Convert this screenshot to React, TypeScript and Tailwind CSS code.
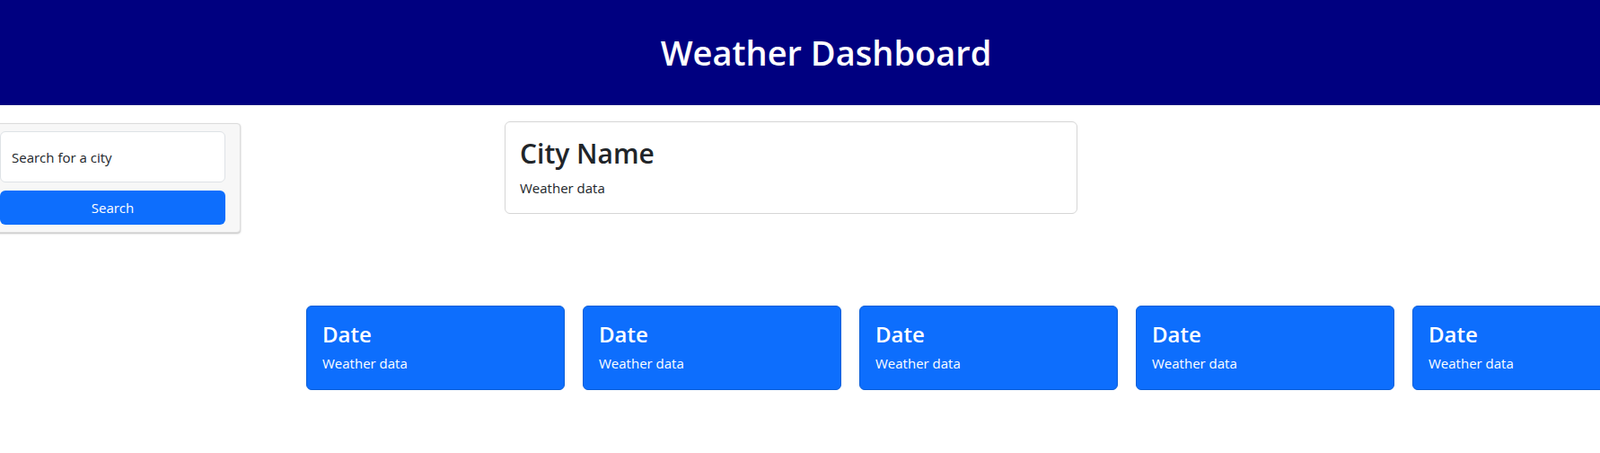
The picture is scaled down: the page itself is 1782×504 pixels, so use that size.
import React from "react";

const font = { fontFamily: '"Segoe UI", "Open Sans", "Noto Sans", sans-serif' };

function DateCard() {
  return (
    <div className="w-[288px] h-[94px] shrink-0 rounded-[6px] border border-[#0b5ed7] bg-[#0d6efd] px-[17px] pt-[17px] text-white">
      <div className="text-[24px] font-semibold leading-[1.2]">Date</div>
      <div className="mt-[6px] text-[15px] leading-[1.5]">Weather data</div>
    </div>
  );
}

export default function App() {
  return (
    <div className="w-full min-h-[504px] overflow-hidden bg-white" style={font}>
      <header className="flex h-[117px] items-center justify-center bg-[#000080] pl-[58px]">
        <h1 className="text-[38px] font-semibold leading-[1.2] text-white">Weather Dashboard</h1>
      </header>

      <div className="flex items-start">
        <div className="ml-[-17px] mt-[20px] w-[285px] shrink-0 rounded-[4px] border border-[#dcdcdc] bg-[#f7f7f7] px-4 py-2 shadow-[0_1px_2px_rgba(0,0,0,0.25)]">
          <input
            className="block h-[57px] w-full rounded-[6px] border border-[#dee2e6] bg-white px-3 text-[15px] text-[#212529] outline-none placeholder:text-[#212529]"
            placeholder="Search for a city"
          />
          <button className="mt-[9px] block h-[38px] w-full rounded-[6px] bg-[#0d6efd] text-[15px] text-white">
            Search
          </button>
        </div>

        <div className="ml-[294px] mt-[18px] h-[103px] w-[638px] shrink-0 rounded-[6px] border border-[#d6d6d6] px-[16px] pt-[17px] text-[#212529]">
          <div className="text-[30px] font-semibold leading-[1.2]">City Name</div>
          <div className="mt-[9px] text-[15px] leading-[1.5]">Weather data</div>
        </div>
      </div>

      <div className="ml-[341px] mt-[81px] flex gap-5">
        <DateCard />
        <DateCard />
        <DateCard />
        <DateCard />
        <DateCard />
      </div>
    </div>
  );
}
